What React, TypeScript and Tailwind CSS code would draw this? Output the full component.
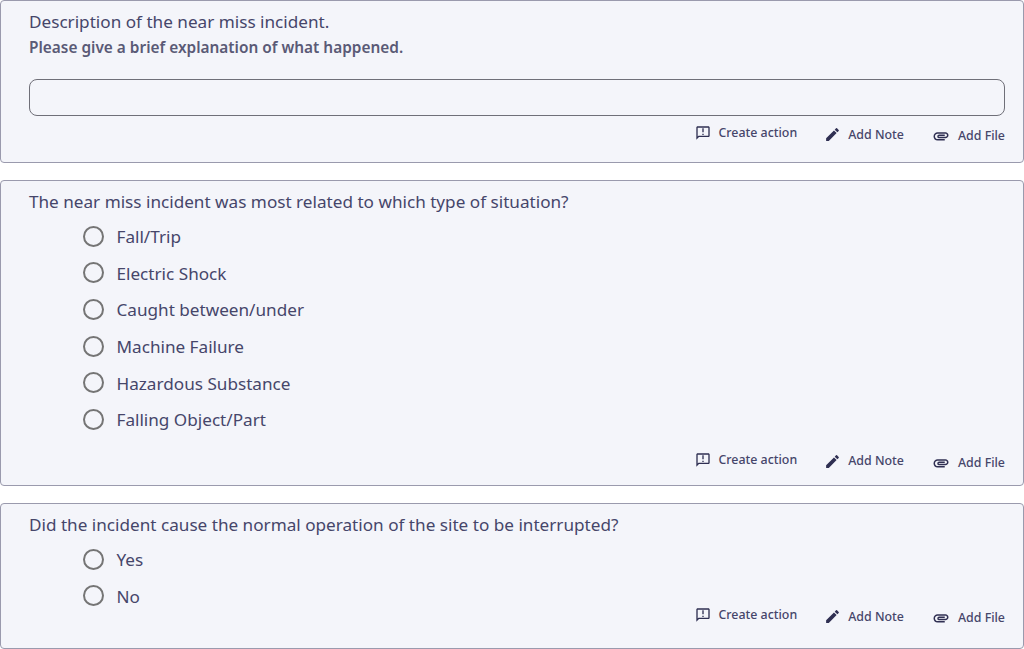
import { MdAttachment, MdEdit, MdOutlineAnnouncement } from "react-icons/md";

function Actions() {
    return (
        <div className="flex items-start justify-end text-[12.4px] font-medium leading-[16px] text-[#46466a]">
            <span className="flex items-center">
                <MdOutlineAnnouncement className="h-[16px] w-[16px] text-[#2f2f52]" />
                <span className="ml-[7px]">Create action</span>
            </span>
            <span className="ml-[27px] mt-[1px] flex items-center">
                <MdEdit className="h-[17px] w-[17px] text-[#2f2f52]" />
                <span className="ml-[7px]">Add Note</span>
            </span>
            <span className="ml-[28px] mt-[2px] flex items-center">
                <MdAttachment className="h-[18px] w-[18px] text-[#2f2f52]" />
                <span className="ml-[8px]">Add File</span>
            </span>
        </div>
    );
}

function Option({ label }: { label: string }) {
    return (
        <div className="flex h-[36.6px] items-center pl-[54px]">
            <span className="h-[21px] w-[21px] rounded-full border-2 border-[#757575]" />
            <span className="ml-[12.5px] mt-[2px] text-[17.15px] leading-[24px] text-[#46466a]">{label}</span>
        </div>
    );
}

function Card({ height, children }: { height: string; children: React.ReactNode }) {
    return (
        <section className={`rounded-[4px] border border-[#9a9aad] bg-[#f4f5fa] pl-[28px] pr-[18px] ${height}`}>
            {children}
        </section>
    );
}

export default function App() {
    return (
        <div className="flex h-[649px] flex-col gap-[17px] overflow-hidden bg-white font-['Noto_Sans','Open_Sans',sans-serif]">
            <Card height="h-[163px] shrink-0">
                <p className="pt-[9px] text-[17.15px] leading-[24px] text-[#46466a]">Description of the near miss incident.</p>
                <p className="mt-[4px] text-[15.4px] font-semibold leading-[20px] text-[#5a5a76]">
                    Please give a brief explanation of what happened.
                </p>
                <div className="mt-[21px] h-[37px] rounded-[8px] border border-[#6f6f78]" />
                <div className="mt-[9px]">
                    <Actions />
                </div>
            </Card>
            <Card height="h-[306px] shrink-0">
                <p className="pt-[9px] text-[17.15px] leading-[24px] text-[#46466a]">
                    The near miss incident was most related to which type of situation?
                </p>
                <div className="mt-[4px]">
                    <Option label="Fall/Trip" />
                    <Option label="Electric Shock" />
                    <Option label="Caught between/under" />
                    <Option label="Machine Failure" />
                    <Option label="Hazardous Substance" />
                    <Option label="Falling Object/Part" />
                </div>
                <div className="mt-[14px]">
                    <Actions />
                </div>
            </Card>
            <Card height="h-[146px] shrink-0">
                <p className="pt-[9px] text-[17.15px] leading-[24px] text-[#46466a]">
                    Did the incident cause the normal operation of the site to be interrupted?
                </p>
                <div className="mt-[4px]">
                    <Option label="Yes" />
                    <Option label="No" />
                </div>
                <div className="mt-[-7px]">
                    <Actions />
                </div>
            </Card>
        </div>
    );
}
